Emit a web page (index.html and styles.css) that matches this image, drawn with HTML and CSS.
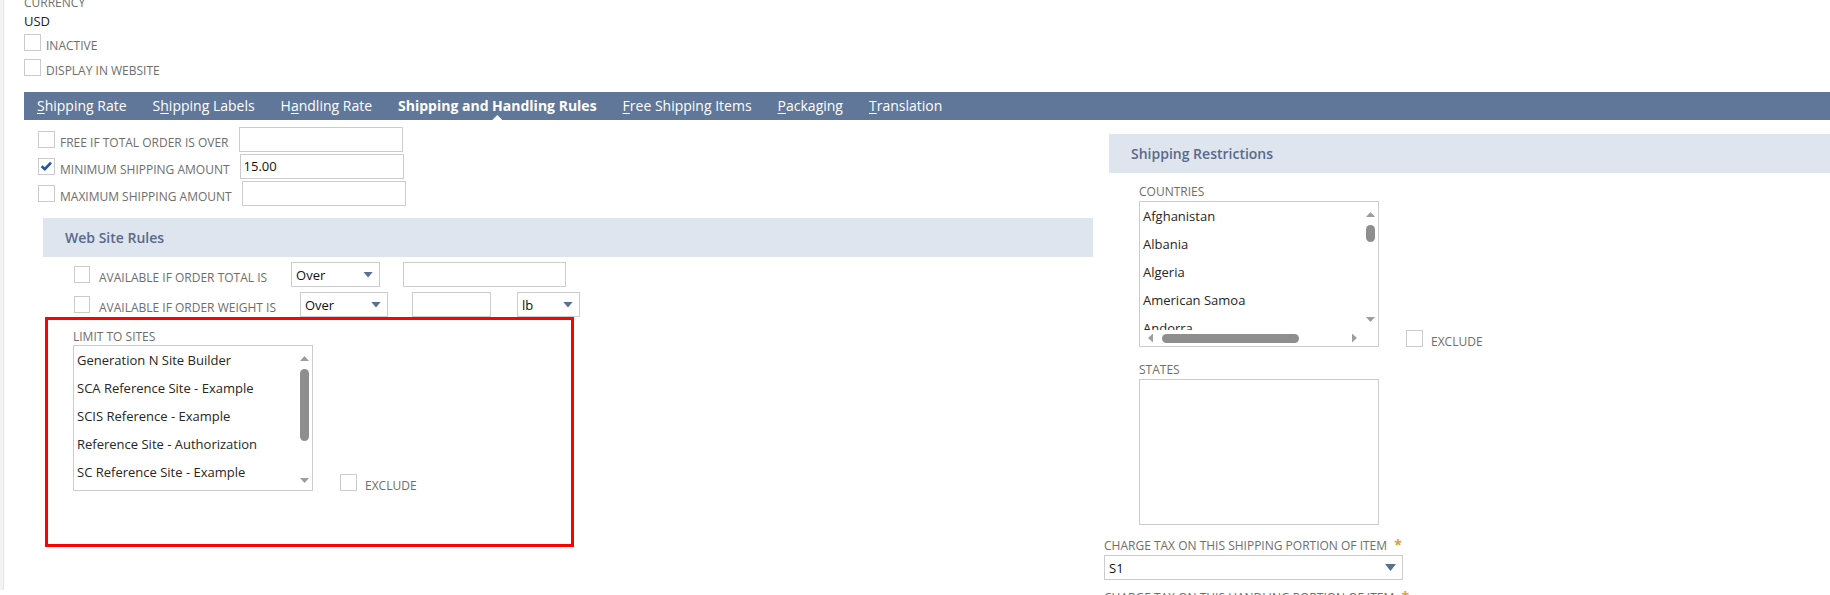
FILE: index.html
```html
<!DOCTYPE html>
<html>
<head>
<meta charset="utf-8">
<title>Shipping Item</title>
<link rel="stylesheet" href="styles.css">
</head>
<body>
<div class="page">
  <div class="inner">
    <div class="top">
      <div class="lbl currency">CURRENCY</div>
      <div class="value">USD</div>
      <div class="check first"><span class="cb"></span><span class="cl">INACTIVE</span></div>
      <div class="check second"><span class="cb"></span><span class="cl">DISPLAY IN WEBSITE</span></div>
    </div>

    <nav class="tabs">
      <span class="tab"><u>S</u>hipping Rate</span>
      <span class="tab">S<u>h</u>ipping Labels</span>
      <span class="tab">H<u>a</u>ndling Rate</span>
      <span class="tab active">Shipping and Handling Rules</span>
      <span class="tab"><u>F</u>ree Shipping Items</span>
      <span class="tab"><u>P</u>ackaging</span>
      <span class="tab"><u>T</u>ranslation</span>
    </nav>

    <div class="body">
      <div class="left">
        <div class="amt-rows">
          <div class="amt-row">
            <span class="check"><span class="cb"></span><span class="cl">FREE IF TOTAL ORDER IS OVER</span></span>
            <span class="input"></span>
          </div>
          <div class="amt-row">
            <span class="check"><span class="cb checked"><svg viewBox="0 0 17 17" width="15" height="15"><path d="M3 8.2 L6.6 11.6 L13.6 4.2" fill="none" stroke="#24579c" stroke-width="3"/></svg></span><span class="cl">MINIMUM SHIPPING AMOUNT</span></span>
            <span class="input">15.00</span>
          </div>
          <div class="amt-row">
            <span class="check"><span class="cb"></span><span class="cl">MAXIMUM SHIPPING AMOUNT</span></span>
            <span class="input"></span>
          </div>
        </div>

        <div class="band band-web">Web Site Rules</div>

        <div class="rule-row">
          <span class="check"><span class="cb"></span><span class="cl">AVAILABLE IF ORDER TOTAL IS</span></span>
          <span class="select sel-over">Over<span class="arrow"></span></span>
          <span class="input w-total"></span>
        </div>
        <div class="rule-row">
          <span class="check"><span class="cb"></span><span class="cl">AVAILABLE IF ORDER WEIGHT IS</span></span>
          <span class="select sel-over2">Over<span class="arrow"></span></span>
          <span class="input w-weight"></span>
          <span class="select sel-lb">lb<span class="arrow"></span></span>
        </div>

        <div class="highlight">
          <div class="field-row">
            <div class="field">
              <div class="lbl">LIMIT TO SITES</div>
              <div class="listbox sites">
                <div class="items">
                  <div class="item">Generation N Site Builder</div>
                  <div class="item">SCA Reference Site - Example</div>
                  <div class="item">SCIS Reference - Example</div>
                  <div class="item">Reference Site - Authorization</div>
                  <div class="item">SC Reference Site - Example</div>
                </div>
                <div class="vscroll sites-v">
                  <span class="arr-up"></span>
                  <span class="track"><span class="thumb"></span></span>
                  <span class="arr-down"></span>
                </div>
              </div>
            </div>
            <div class="check exclude"><span class="cb"></span><span class="cl">EXCLUDE</span></div>
          </div>
        </div>
      </div>

      <div class="right">
        <div class="band band-ship">Shipping Restrictions</div>
        <div class="rfields">
          <div class="field-row countries-row">
            <div class="field">
              <div class="lbl">COUNTRIES</div>
              <div class="listbox countries">
                <div class="c-items">
                  <div class="item">Afghanistan</div>
                  <div class="item">Albania</div>
                  <div class="item">Algeria</div>
                  <div class="item">American Samoa</div>
                  <div class="item">Andorra</div>
                </div>
                <div class="vscroll countries-v">
                  <span class="arr-up"></span>
                  <span class="track"><span class="thumb"></span></span>
                  <span class="arr-down"></span>
                </div>
                <div class="hscroll">
                  <span class="arr-left"></span>
                  <span class="hthumb"></span>
                  <span class="arr-right"></span>
                </div>
                <div class="corner"></div>
              </div>
            </div>
            <div class="check exclude"><span class="cb"></span><span class="cl">EXCLUDE</span></div>
          </div>
          <div class="field states">
            <div class="lbl">STATES</div>
            <div class="listbox empty"></div>
          </div>
        </div>
        <div class="tax">
          <div class="lbl">CHARGE TAX ON THIS SHIPPING PORTION OF ITEM <span class="req">*</span></div>
          <div class="select sel-tax">S1<span class="arrow"></span></div>
          <div class="lbl lbl-next">CHARGE TAX ON THIS HANDLING PORTION OF ITEM <span class="req">*</span></div>
        </div>
      </div>
    </div>
  </div>
</div>
</body>
</html>
```

FILE: styles.css
```css
* { box-sizing: border-box; }
html, body { margin: 0; padding: 0; }
html { overflow: hidden; }
body {
  width: 1830px;
  height: 595px;
  overflow: hidden;
  background: #fff;
  font-family: "Open Sans", "Liberation Sans", Arial, sans-serif;
  font-size: 13px;
  color: #222;
}

.page { height: 595px; border-left: 3px solid #f3f3f3; }
.inner { height: 100%; border-left: 1px solid #e4e4e4; padding-left: 20px; }

.lbl {
  font-size: 12px;
  line-height: 16px;
  color: #6e6e6e;
  text-transform: uppercase;
  white-space: nowrap;
}
.currency { margin-top: -5px; }
.value { font-size: 13px; line-height: 20px; color: #222; }

.check { display: flex; align-items: flex-end; }
.top .check { height: 17px; }
.top .check.first { margin-top: 3px; }
.top .check.second { margin-top: 8px; }

.cb {
  flex: none;
  width: 17px;
  height: 17px;
  border: 1px solid #cbcbcb;
  background: #fff;
  margin-right: 5px;
  display: flex;
  align-items: center;
  justify-content: center;
}
.cl {
  font-size: 12px;
  line-height: 12px;
  color: #6e6e6e;
  margin-bottom: -1px;
  white-space: nowrap;
}

/* tabs */
.tabs {
  margin-top: 16px;
  display: flex;
  height: 28px;
  background: #607799;
}
.tab {
  position: relative;
  padding: 0 13px;
  line-height: 28px;
  font-size: 14px;
  color: #fff;
  white-space: nowrap;
}
.tab u { text-decoration-thickness: 1px; text-underline-offset: 2px; }
.tab.active { font-weight: 700; }
.tab.active::after {
  content: "";
  position: absolute;
  left: 50%;
  bottom: 0;
  width: 10px;
  height: 5px;
  margin-left: -5px;
  background: #fff;
  clip-path: polygon(50% 0, 100% 100%, 0 100%);
}

/* columns */
.body { display: flex; }
.left { flex: none; width: 1069px; }
.right { flex: 1; margin-left: 11px; }

.amt-rows {
  margin-top: 7px;
  padding-left: 14px;
  display: flex;
  flex-direction: column;
  gap: 2px;
}
.amt-row { display: flex; align-items: center; height: 25px; }
.amt-row .cl { margin-right: 10px; }

.input {
  flex: none;
  display: block;
  width: 164px;
  height: 25px;
  border: 1px solid #cccccc;
  background: #fff;
  font-size: 13px;
  line-height: 23px;
  padding-left: 3px;
  color: #111;
}

.band {
  height: 39px;
  line-height: 39px;
  background: #dfe5ef;
  color: #59698a;
  font-size: 14px;
  font-weight: 600;
  white-space: nowrap;
}
.band-web { margin: 12px 0 0 19px; padding-left: 22px; }

.rule-row {
  display: flex;
  align-items: center;
  height: 25px;
  margin-top: 5px;
  padding-left: 50px;
}
.rule-row .cb { width: 16px; margin-right: 9px; }
.rule-row .cl { margin-right: 24px; }

.select {
  flex: none;
  display: flex;
  align-items: center;
  height: 25px;
  border: 1px solid #cccccc;
  background: #fff;
  padding: 0 6px 0 4px;
  font-size: 13px;
  color: #111;
}
.select .arrow {
  margin-left: auto;
  width: 10px;
  height: 6px;
  background: #5b6f90;
  clip-path: polygon(0 0, 100% 0, 50% 100%);
}
.sel-over { width: 89px; margin-right: 23px; }
.sel-over2 { width: 88px; margin-right: 24px; }
.w-total { width: 163px; }
.w-weight { width: 79px; margin-right: 26px; }
.sel-lb { width: 63px; }

/* highlight annotation */
.highlight {
  margin-left: 21px;
  width: 529px;
  border: 3px solid #ff0000;
  padding: 9px 0 53px 25px;
}
.field-row { display: flex; align-items: flex-end; }
.exclude { margin-left: 27px; }
.exclude .cb { margin-right: 8px; }

.listbox {
  width: 240px;
  height: 146px;
  border: 1px solid #cccccc;
  background: #fff;
}
.sites { display: flex; }
.items { flex: 1; overflow: hidden; }
.item {
  font-size: 13px;
  line-height: 28px;
  padding-left: 3px;
  color: #262626;
  white-space: nowrap;
}

.vscroll {
  width: 15px;
  display: flex;
  flex-direction: column;
  align-items: center;
}
.sites-v { padding: 10px 0 7px; }
.countries-v { padding: 10px 0 8px; }
.arr-up, .arr-down {
  flex: none;
  width: 9px;
  height: 5px;
  background: #9d9d9d;
}
.arr-up { clip-path: polygon(50% 0, 100% 100%, 0 100%); }
.arr-down { clip-path: polygon(0 0, 100% 0, 50% 100%); }
.track { flex: 1; width: 9px; margin-top: 8px; }
.thumb {
  display: block;
  width: 9px;
  border-radius: 5px;
  background: #8e8e8e;
}
.sites-v .thumb { height: 72px; }
.countries-v .thumb { height: 17px; }

.countries {
  margin-top: 1px;
  display: grid;
  grid-template-columns: 1fr 15px;
  grid-template-rows: 128px 16px;
}
.c-items { overflow: hidden; }
.hscroll {
  display: flex;
  align-items: center;
  padding: 0 6px 0 8px;
}
.arr-left, .arr-right {
  flex: none;
  width: 5px;
  height: 9px;
  background: #9d9d9d;
}
.arr-left { clip-path: polygon(100% 0, 100% 100%, 0 50%); }
.arr-right { margin-left: auto; clip-path: polygon(0 0, 100% 50%, 0 100%); }
.hthumb {
  flex: none;
  width: 137px;
  height: 9px;
  margin-left: 9px;
  border-radius: 5px;
  background: #8e8e8e;
}

/* right column */
.band-ship { margin: 14px 0 0 5px; padding-left: 22px; }
.rfields { padding-left: 35px; }
.countries-row { margin-top: 11px; }
.states { margin-top: 15px; }
.states .listbox { margin-top: 1px; }

.tax { margin-top: 12px; }
.sel-tax { width: 299px; margin-top: 1px; padding-right: 6px; }
.sel-tax .arrow { width: 11px; height: 7px; }
.lbl-next { margin-top: 9px; }
.req {
  color: #e39b32;
  font-size: 14px;
  font-weight: 700;
  margin-left: 4px;
}
```
